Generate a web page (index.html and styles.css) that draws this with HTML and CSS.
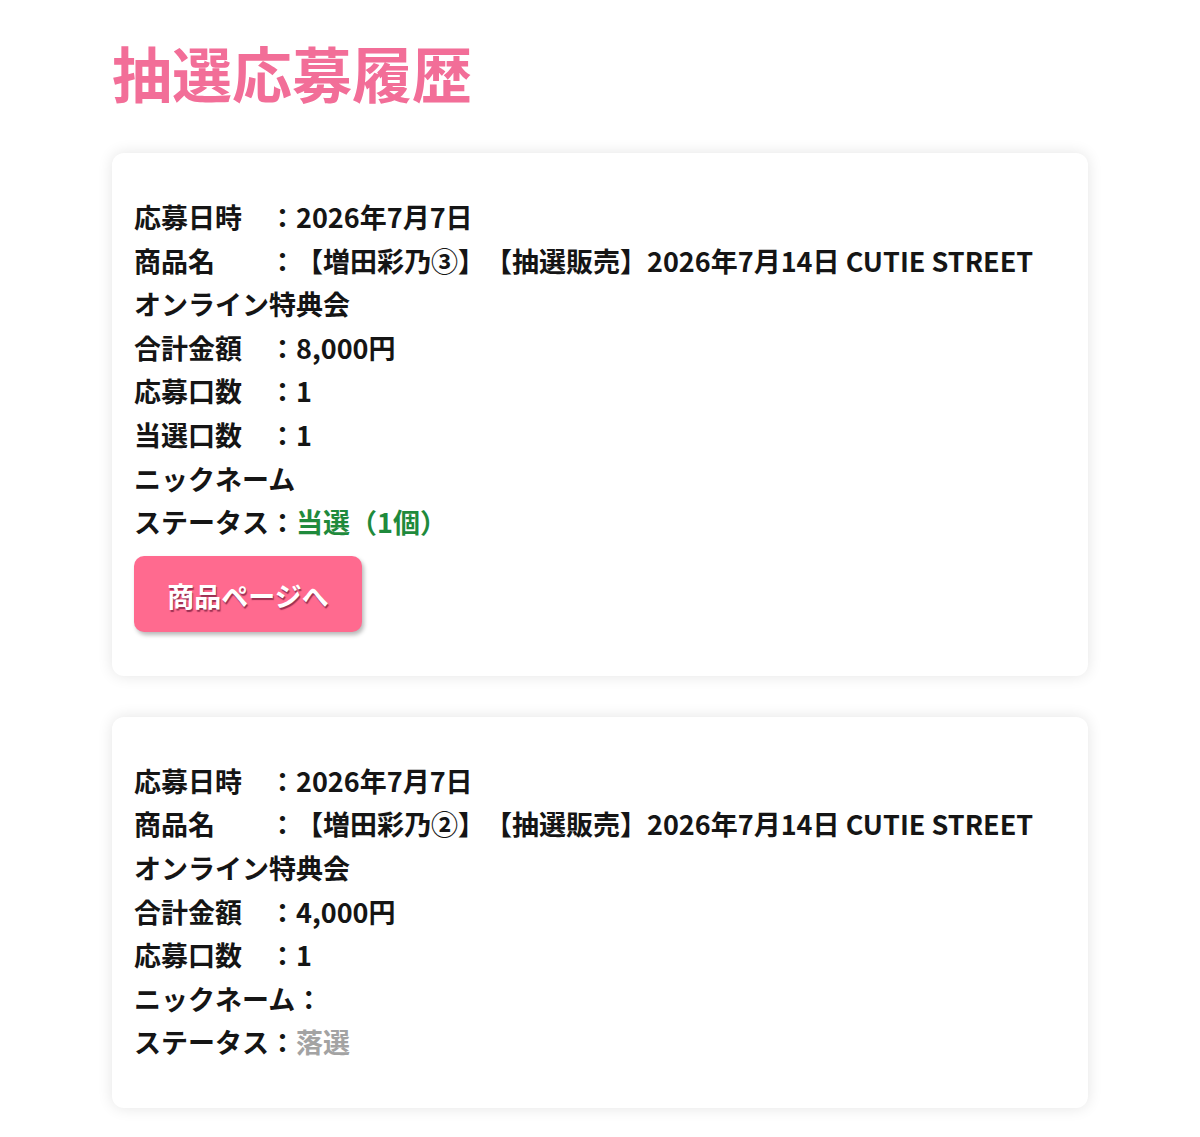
FILE: index.html
```html
<!DOCTYPE html>
<html lang="ja">
<head>
<meta charset="utf-8">
<title>抽選応募履歴</title>
<link rel="stylesheet" href="styles.css">
</head>
<body>
<main class="page">
  <h1 class="title">抽選応募履歴</h1>
  <section class="card">
    <p class="row">応募日時　：2026年7月7日</p>
    <p class="row">商品名　　：【増田彩乃③】【抽選販売】2026年7月14日 CUTIE STREET オンライン特典会</p>
    <p class="row">合計金額　：8,000円</p>
    <p class="row">応募口数　：1</p>
    <p class="row">当選口数　：1</p>
    <p class="row">ニックネーム</p>
    <p class="row">ステータス：<span class="win">当選（1個）</span></p>
    <a class="btn" href="#">商品ページへ</a>
  </section>
  <section class="card">
    <p class="row">応募日時　：2026年7月7日</p>
    <p class="row">商品名　　：【増田彩乃②】【抽選販売】2026年7月14日 CUTIE STREET オンライン特典会</p>
    <p class="row">合計金額　：4,000円</p>
    <p class="row">応募口数　：1</p>
    <p class="row">ニックネーム：</p>
    <p class="row">ステータス：<span class="lose">落選</span></p>
  </section>
</main>
</body>
</html>
```
FILE: styles.css
```css
html, body {
  margin: 0;
  padding: 0;
  background: #ffffff;
}
body {
  font-family: "Noto Sans CJK JP", "Noto Sans", sans-serif;
  color: #151515;
  text-spacing-trim: space-all;
}
.page {
  width: 976px;
  padding: 36px 0 30px 112px;
  display: flex;
  flex-direction: column;
  gap: 41px;
}
.title {
  margin: 0 0 4px;
  font-size: 60px;
  line-height: 72px;
  font-weight: 700;
  color: #f26e98;
}
.card {
  background: #ffffff;
  border-radius: 12px;
  box-shadow: 0 0 15px rgba(0, 0, 0, 0.11);
  padding: 42px 22px 44px;
  display: flex;
  flex-direction: column;
  align-items: flex-start;
}
.row {
  margin: 0;
  font-size: 27px;
  line-height: 43.6px;
  font-weight: 700;
  text-spacing-trim: space-all;
}
.win {
  color: #1f8a3c;
}
.lose {
  color: #a3a3a3;
}
.btn {
  margin-top: 12px;
  margin-bottom: 0;
  display: block;
  width: 228px;
  height: 76px;
  box-sizing: border-box;
  padding-top: 3px;
  border-radius: 10px;
  background: #ff6a8f;
  color: #ffffff;
  font-size: 27px;
  line-height: 73px;
  font-weight: 700;
  text-align: center;
  text-decoration: none;
  text-shadow: 1px 2px 1px rgba(120, 30, 60, 0.75);
  box-shadow: 2px 3px 4px rgba(0, 0, 0, 0.28);
}
```
